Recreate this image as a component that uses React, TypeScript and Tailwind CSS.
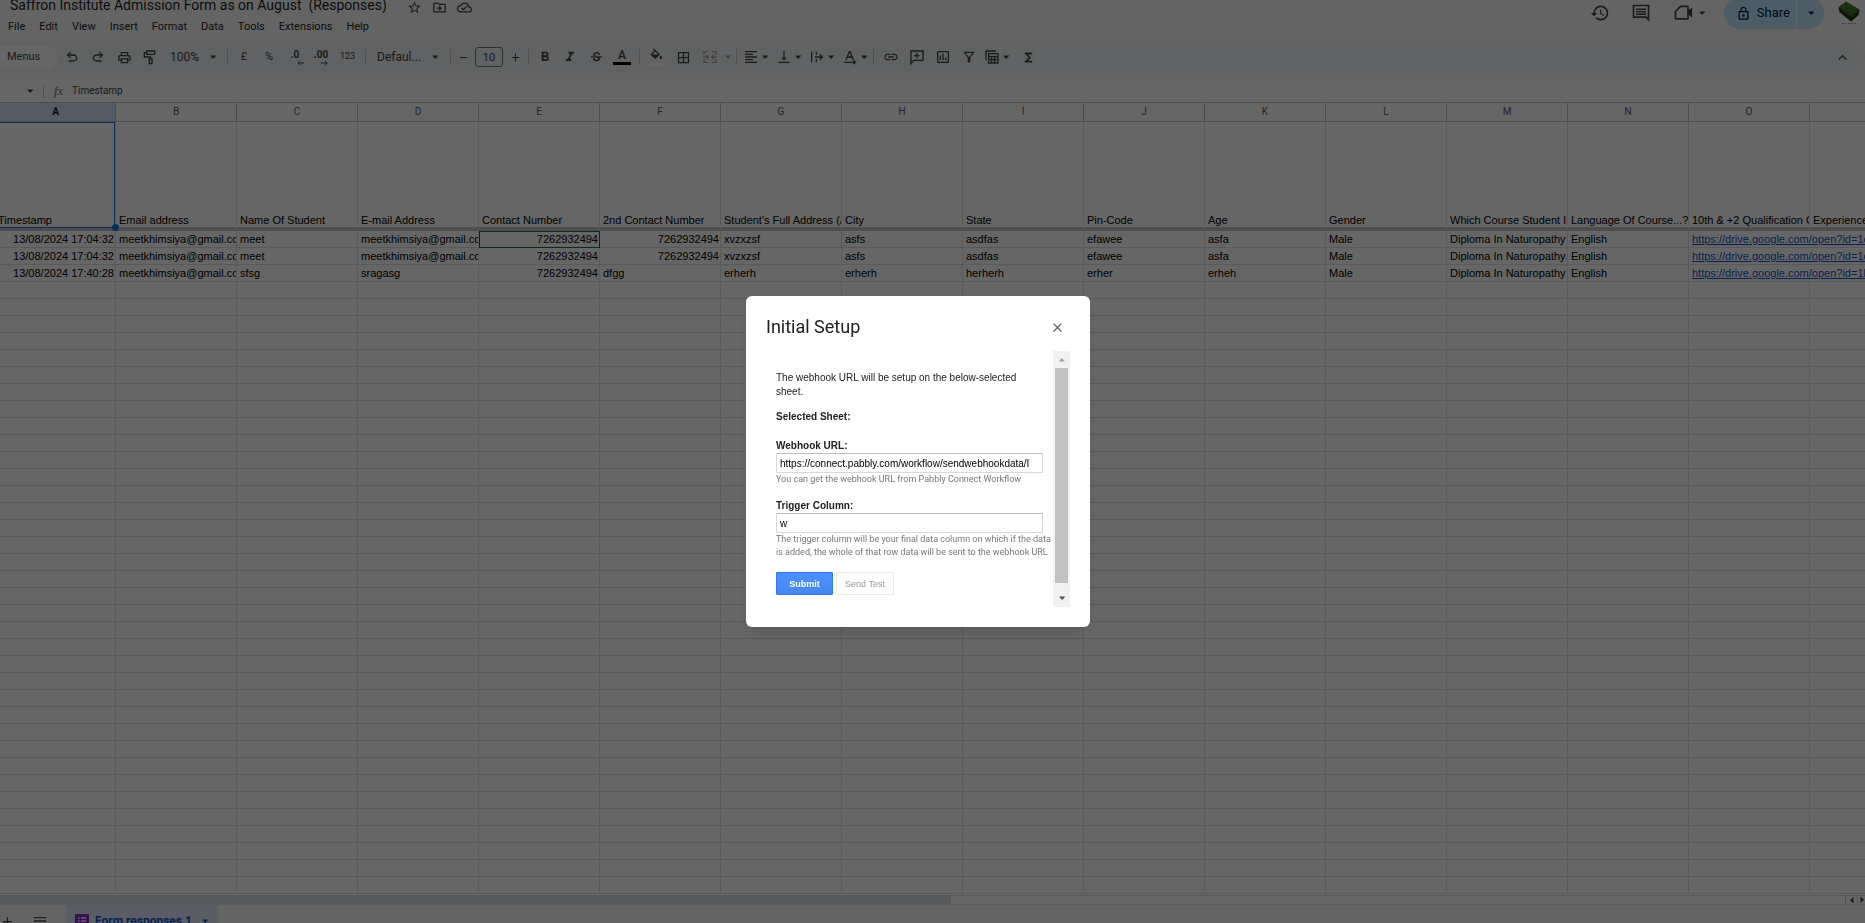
import { ReactNode } from "react";
import clsx from "clsx";
import {
    MdAdd,
    MdBorderAll,
    MdClose,
    MdExpandLess,
    MdFormatAlignLeft,
    MdFormatBold,
    MdFormatItalic,
    MdFunctions,
    MdHistory,
    MdLink,
    MdMenu,
    MdOutlineCloudDone,
    MdOutlineDriveFileMove,
    MdOutlineFilterAlt,
    MdOutlineInsertChart,
    MdOutlineLock,
    MdOutlinePrint,
    MdRemove,
    MdStarOutline,
    MdStrikethroughS,
    MdVerticalAlignBottom,
} from "react-icons/md";

const menus = ["File", "Edit", "View", "Insert", "Format", "Data", "Tools", "Extensions", "Help"];

const columns = ["A", "B", "C", "D", "E", "F", "G", "H", "I", "J", "K", "L", "M", "N", "O", ""];

const headings = [
    "Timestamp",
    "Email address",
    "Name Of Student",
    "E-mail Address",
    "Contact Number",
    "2nd Contact Number",
    "Student's Full Address (A",
    "City",
    "State",
    "Pin-Code",
    "Age",
    "Gender",
    "Which Course Student Is",
    "Language Of Course...?",
    "10th & +2 Qualification C",
    "Experience",
];

const responses = [
    ["13/08/2024 17:04:32", "meetkhimsiya@gmail.com", "meet", "meetkhimsiya@gmail.com", "7262932494", "7262932494", "xvzxzsf", "asfs", "asdfas", "efawee", "asfa", "Male", "Diploma In Naturopathy (", "English", "https://drive.google.com/open?id=1os", ""],
    ["13/08/2024 17:04:32", "meetkhimsiya@gmail.com", "meet", "meetkhimsiya@gmail.com", "7262932494", "7262932494", "xvzxzsf", "asfs", "asdfas", "efawee", "asfa", "Male", "Diploma In Naturopathy (", "English", "https://drive.google.com/open?id=1os", ""],
    ["13/08/2024 17:40:28", "meetkhimsiya@gmail.com", "sfsg", "sragasg", "7262932494", "dfgg", "erherh", "erherh", "herherh", "erher", "erheh", "Male", "Diploma In Naturopathy (", "English", "https://drive.google.com/open?id=1kb", ""],
];

const emptyRows = Array.from({ length: 36 }, (_, i) => i);

function Caret({ className }: { className?: string }) {
    return (
        <svg viewBox="0 0 10 10" className={clsx("w-[10px] h-[10px] shrink-0", className)} fill="currentColor">
            <path d="M2 3.5h6.4L5.2 7z" />
        </svg>
    );
}

function Stroke({ children, size = "w-4 h-4" }: { children: ReactNode; size?: string }) {
    return (
        <svg viewBox="0 0 24 24" className={size} fill="none" stroke="currentColor" strokeWidth="2">
            {children}
        </svg>
    );
}

function UndoIcon({ flip }: { flip?: boolean }) {
    return (
        <svg viewBox="0 -960 960 960" className={clsx("w-4 h-4", flip && "-scale-x-100")} fill="currentColor">
            <path d="M280-200v-80h284q63 0 109.5-40T720-420q0-60-46.5-100T564-560H312l104 104-56 56-200-200 200-200 56 56-104 104h252q97 0 169.5 63T800-420q0 94-72.5 157T564-200H280Z" />
        </svg>
    );
}

type ToolProps = {
    label: string;
    width?: string;
    className?: string;
    children: ReactNode;
};

function Tool({ label, width = "w-[26px]", className, children }: ToolProps) {
    return (
        <button type="button" aria-label={label} className={clsx("h-6 shrink-0 flex items-center justify-center", width, className)}>
            {children}
        </button>
    );
}

function Divider() {
    return <div className="w-px h-4 mx-1 shrink-0 bg-[#c7c7c7]" />;
}

function DropTool({ label, last, children }: { label: string; last?: boolean; children: ReactNode }) {
    return (
        <button type="button" aria-label={label} className={clsx("h-6 shrink-0 flex items-center", !last && "mr-1")}>
            <span className="w-[19px] flex justify-center">{children}</span>
            <Caret />
        </button>
    );
}

function Avatar() {
    return (
        <svg viewBox="0 0 24 26" className="w-6 h-[26px]">
            <circle cx="12" cy="12" r="11.5" fill="#fff" />
            <path d="M1.5 7 9 1.5l13.5 8-1 5.5-7.5 6.5L2.5 12z" fill="#3c7328" />
            <path d="M1.5 7 14 16.5l8.500-7-1 5.500-7.500 6.500L2.500 12z" fill="#24401b" />
            <path d="M5 6l3 1M9 4l4 3M11 9l4 2M15 7l3 2" stroke="#5c9a3c" />
            <path d="M5 23.500h14" stroke="#aaa" strokeDasharray="2 1" />
        </svg>
    );
}

function Header() {
    return (
        <header className="h-[41px] shrink-0 flex justify-between text-[#444746]">
            <div>
                <div className="h-[14px] flex items-center pl-[10px]">
                    <h1 className="whitespace-pre text-[14px] leading-3 pb-1 text-[#1f1f1f]">Saffron Institute Admission Form as on August  (Responses)</h1>
                    <div className="flex items-center gap-[10px] ml-5">
                        <button type="button" aria-label="Star"><MdStarOutline size={15} /></button>
                        <button type="button" aria-label="Move"><MdOutlineDriveFileMove size={15} /></button>
                        <button type="button" aria-label="Document status"><MdOutlineCloudDone size={15} /></button>
                    </div>
                </div>
                <nav className="flex gap-[14px] pl-2 pt-[5px] text-[11px] leading-4 text-[#1f1f1f]">
                    {menus.map((menu) => (
                        <button type="button" key={menu}>{menu}</button>
                    ))}
                </nav>
            </div>
            <div className="h-[26px] flex items-center pr-1">
                <button type="button" aria-label="Version history" className="mr-[21px]"><MdHistory size={20} /></button>
                <button type="button" aria-label="Comments" className="mr-[22px]">
                    <Stroke size="w-5 h-5">
                        <path d="M3 3h18v17l-3-3H3zM6 7.500h12M6 10.500h12M6 13.500h12" />
                    </Stroke>
                </button>
                <button type="button" aria-label="Join a call" className="flex items-center mr-[17px]">
                    <Stroke size="w-5 h-5">
                        <path d="M9 4h9v15H3V10z" strokeLinejoin="round" />
                        <path d="M18 10.500l4-3v8l-4-3z" fill="currentColor" />
                    </Stroke>
                    <Caret className="ml-1" />
                </button>
                <div className="h-8 flex rounded-full overflow-hidden text-[#001d35]">
                    <button type="button" className="w-[72px] flex items-center justify-end gap-[6px] pr-[6px] bg-[#c2e7ff] text-[13px]">
                        <MdOutlineLock size={15} />
                        Share
                    </button>
                    <button type="button" aria-label="Quick sharing" className="w-[27px] ml-px flex items-center justify-center bg-[#c2e7ff]"><Caret /></button>
                </div>
                <button type="button" aria-label="Account" className="ml-[13px]"><Avatar /></button>
            </div>
        </header>
    );
}

function Toolbar() {
    return (
        <div className="h-8 shrink-0 flex items-center rounded-r-full bg-[#f0f4f9] text-[#444746] text-[11px]">
            <button type="button" className="w-[58px] h-[22px] mr-px pl-[7px] shrink-0 text-left rounded-r-full bg-white">Menus</button>
            <Tool label="Undo"><UndoIcon /></Tool>
            <Tool label="Redo"><UndoIcon flip /></Tool>
            <Tool label="Print"><MdOutlinePrint size={15} /></Tool>
            <Tool label="Paint format">
                <Stroke>
                    <path d="M7 3h12v5H7zM7 5.500H3.500V12H13v3M11 15h4v7h-4z" />
                </Stroke>
            </Tool>
            <button type="button" className="w-[60px] h-6 shrink-0 flex items-center pl-[7px] text-[12px]">
                100%
                <Caret className="ml-auto mr-[5px]" />
            </button>
            <Divider />
            <Tool label="Format as currency" width="w-6">£</Tool>
            <Tool label="Format as percent">%</Tool>
            <Tool label="Decrease decimal places">
                <span className="relative text-[10px] font-bold leading-4 pb-1">
                    .0
                    <svg viewBox="0 0 8 6" className="absolute w-[7px] h-[6px] -right-[5px] bottom-px" fill="none" stroke="currentColor"><path d="M8 3H1M3.500.5 1 3l2.500 2.500" /></svg>
                </span>
            </Tool>
            <Tool label="Increase decimal places">
                <span className="relative text-[10px] font-bold leading-4 pb-1">
                    .00
                    <svg viewBox="0 0 8 6" className="absolute w-[7px] h-[6px] right-0 bottom-px" fill="none" stroke="currentColor"><path d="M0 3h7M4.500.5 7 3 4.500 5.500" /></svg>
                </span>
            </Tool>
            <Tool label="More formats" width="w-[27px]"><span className="text-[9px]">123</span></Tool>
            <Divider />
            <button type="button" className="w-[76px] h-6 shrink-0 flex items-center pl-[7px] text-[12px]">
                Defaul...
                <Caret className="ml-auto mr-[6px]" />
            </button>
            <Divider />
            <Tool label="Decrease font size" width="w-[17px]"><MdRemove size={13} /></Tool>
            <input aria-label="Font size" defaultValue="10" className="w-7 h-5 mx-[3px] shrink-0 rounded-[3px] border border-[#747775] text-center text-[11px]" />
            <Tool label="Increase font size" width="w-[18px]"><MdAdd size={13} /></Tool>
            <Divider />
            <Tool label="Bold" width="w-6"><MdFormatBold size={16} /></Tool>
            <Tool label="Italic"><MdFormatItalic size={16} /></Tool>
            <Tool label="Strikethrough"><MdStrikethroughS size={15} /></Tool>
            <Tool label="Text colour">
                <span className="w-[18px] h-4 border-b-[3px] border-black leading-3 text-[12px] font-medium">A</span>
            </Tool>
            <Divider />
            <Tool label="Fill colour" width="w-[25px]">
                <span className="w-[18px] h-[18px] border-b-[3px] border-white flex justify-center">
                    <svg viewBox="0 0 24 20" className="w-[15px] h-[13px]" fill="currentColor">
                        <path d="M16.56 8.94 7.62 0 6.21 1.41l2.38 2.38-5.15 5.15a1.49 1.49 0 0 0 0 2.12l5.5 5.5c.29.29.68.44 1.06.44s.77-.15 1.06-.44l5.5-5.5c.59-.58.59-1.53 0-2.12zM5.21 10 10 5.21 14.79 10H5.21zM19 11.5s-2 2.17-2 3.5c0 1.1.9 2 2 2s2-.9 2-2c0-1.33-2-3.5-2-3.5z" />
                    </svg>
                </span>
            </Tool>
            <Tool label="Borders" width="w-7"><MdBorderAll size={15} /></Tool>
            <button type="button" aria-label="Merge cells" disabled className="h-6 shrink-0 flex items-center text-[#a4a6a6]">
                <span className="w-[26px] flex justify-center">
                    <Stroke>
                        <path d="M9 4H3v5M15 4h6v5M9 20H3v-5M15 20h6v-5M2 12h7M6.500 9l3 3-3 3M22 12h-7M17.500 9l-3 3 3 3" />
                    </Stroke>
                </span>
                <Caret className="-mr-px" />
            </button>
            <Divider />
            <DropTool label="Horizontal align"><MdFormatAlignLeft size={16} /></DropTool>
            <DropTool label="Vertical align"><MdVerticalAlignBottom size={16} /></DropTool>
            <DropTool label="Text wrapping">
                <Stroke><path d="M4 4v16M11 4v5M11 15v5M9 12h11M16 8l4 4-4 4" /></Stroke>
            </DropTool>
            <DropTool label="Text rotation" last>
                <Stroke><path d="M6 16 11 4h1l5 12M8 12h7M3 20h17M17 17l3 3-3 3" /></Stroke>
            </DropTool>
            <Divider />
            <Tool label="Insert link"><MdLink size={16} /></Tool>
            <Tool label="Insert comment">
                <Stroke><path d="M3 22V3h18v14H7zM12 6v8M8 10h8" /></Stroke>
            </Tool>
            <Tool label="Insert chart"><MdOutlineInsertChart size={16} /></Tool>
            <Tool label="Create a filter"><MdOutlineFilterAlt size={16} /></Tool>
            <DropTool label="Table views">
                <Stroke><path d="M3 17V3h15M7 7h14v14H7zM7 11.500h14M7 16h14M11.500 12v9M16 12v9" /></Stroke>
            </DropTool>
            <Tool label="Functions"><MdFunctions size={15} /></Tool>
            <Tool label="Hide the menus" className="ml-auto mr-[10px]"><MdExpandLess size={17} /></Tool>
        </div>
    );
}

function FormulaBar() {
    return (
        <div className="h-[22px] mt-[7px] shrink-0 flex items-center bg-white text-[#444746]">
            <button type="button" aria-label="Name box" className="ml-[25px]"><Caret /></button>
            <div className="w-px h-[13px] ml-2 bg-[#c7c7c7]" />
            <span className="ml-[10px] w-[18px] font-['Liberation_Serif',serif] italic text-[13px] leading-4 text-[#747775]">fx</span>
            <input aria-label="Formula" defaultValue="Timestamp" className="flex-1 h-4 mb-[2px] text-[10px]" />
        </div>
    );
}

function Cell({ text, col, marked }: { text: string; col: number; marked?: boolean }) {
    const isNumber = /^\d+$/.test(text) || col === 0;
    const isLink = text.startsWith("https");
    return (
        <td className={clsx("h-[17px] p-0 border-b border-[#e1e1e1]", !isLink && "border-r", marked && "outline -outline-offset-1 outline-[#137333]")}>
            <div className={clsx("h-4 leading-4 pl-[3px] whitespace-nowrap", isNumber && "text-right pr-px", !isLink && "overflow-hidden")}>
                {isLink ? <a href={text} className="underline text-[#1155cc]">{text}</a> : text}
            </div>
        </td>
    );
}

function Sheet() {
    return (
        <main className="flex-1 min-h-0 overflow-hidden bg-white">
            <table className="w-[1931px] table-fixed border-separate border-spacing-0 font-['Liberation_Sans',Arial,sans-serif] text-[11px] text-black">
                <colgroup>
                    {columns.map((name, i) => (
                        <col key={i} className={i === 0 ? "w-[116px]" : "w-[121px]"} />
                    ))}
                </colgroup>
                <thead>
                    <tr>
                        {columns.map((name, i) => (
                            <th
                                key={i}
                                className={clsx(
                                    "h-5 p-0 border-y border-r border-[#c0c0c0] font-['Roboto',sans-serif] text-[10px] leading-4",
                                    i === 0 ? "pr-1 bg-[#d3e3fd] text-[#041e49] font-bold" : "font-normal text-[#575a5a]"
                                )}
                            >
                                {name}
                            </th>
                        ))}
                    </tr>
                </thead>
                <tbody>
                    <tr>
                        {headings.map((text, i) => (
                            <td
                                key={text}
                                className={clsx("relative h-[109px] p-0 align-bottom border-r border-b-4 border-r-[#e1e1e1] border-b-[#c4c4c4]", i === 0 && "z-10")}
                            >
                                <div className={clsx("leading-[14px] whitespace-nowrap overflow-hidden", i === 0 ? "-ml-[2px]" : "pl-[3px]")}>{text}</div>
                                {i === 0 && (
                                    <>
                                        <div className="absolute top-0 left-0 right-0 -bottom-px border border-l-0 border-[#1a73e8]" />
                                        <div className="absolute -right-1 -bottom-1 w-[7px] h-[7px] rounded-full bg-[#1a73e8]" />
                                    </>
                                )}
                            </td>
                        ))}
                    </tr>
                    {responses.map((row, r) => (
                        <tr key={r}>
                            {row.map((text, c) => (
                                <Cell key={c} text={text} col={c} marked={r === 0 && c === 4} />
                            ))}
                        </tr>
                    ))}
                    {emptyRows.map((r) => (
                        <tr key={r}>
                            {columns.map((name, c) => (
                                <td key={c} className="h-[17px] p-0 border-r border-b border-[#e1e1e1]" />
                            ))}
                        </tr>
                    ))}
                </tbody>
            </table>
        </main>
    );
}

function Footer() {
    return (
        <footer className="h-[29px] shrink-0 overflow-hidden">
            <div className="h-[11px] pt-px flex border-b border-[#e1e1e1] bg-white text-[#444746]">
                <div className="w-[51%] bg-[#dadce0]" />
                <div className="flex-1 border-t border-[#e1e1e1]" />
                <button type="button" aria-label="Scroll left" className="w-3 border-l border-t border-[#d0d0d0] flex items-center justify-center"><Caret className="rotate-90" /></button>
                <button type="button" aria-label="Scroll right" className="w-2 border-l border-t border-[#d0d0d0] flex items-center justify-center"><Caret className="-rotate-90" /></button>
            </div>
            <div className="h-8 flex items-center text-[#444746]">
                <button type="button" aria-label="Add sheet"><MdAdd size={15} /></button>
                <button type="button" aria-label="All sheets" className="ml-[17px]"><MdMenu size={16} /></button>
                <button type="button" className="w-[152px] h-full ml-[18px] pl-[9px] flex items-center bg-[#e1e9f7] text-[#0b57d0] text-[12px] font-bold">
                    <svg viewBox="0 0 14 14" className="w-[14px] h-[14px] mr-[6px]">
                        <rect width="14" height="14" rx="1" fill="#8430ce" />
                        <path d="M3 4h1.500M6 4h5M3 7h1.500M6 7h5M3 10h1.500M6 10h5" stroke="#fff" strokeWidth="1.400" />
                    </svg>
                    Form responses 1
                    <Caret className="ml-auto mr-2" />
                </button>
            </div>
        </footer>
    );
}

function SetupDialog() {
    return (
        <div className="fixed inset-0 z-20 flex items-center justify-center pr-[29px] bg-black/60">
            <div role="dialog" aria-labelledby="setup-title" className="w-[344px] pb-5 rounded-md bg-white shadow-lg">
                <div className="h-[55px] pl-5 pr-[25px] pb-[6px] pt-[13px] flex items-center justify-between">
                    <h2 id="setup-title" className="text-[18px] leading-6 text-[#202124]">Initial Setup</h2>
                    <button type="button" aria-label="Close" className="text-[#5f6368]"><MdClose size={15} /></button>
                </div>
                <div className="flex pl-[30px] pr-5 font-['Liberation_Sans',Arial,sans-serif] text-[10px] leading-[14px] text-[#222]">
                    <form className="flex-1 min-w-0 pt-5 mr-[10px]">
                        <p>The webhook URL will be setup on the below-selected sheet.</p>
                        <p className="mt-[11px] font-bold">Selected Sheet:</p>
                        <label htmlFor="webhook" className="block mt-[15px] font-bold">Webhook URL:</label>
                        <input
                            id="webhook"
                            defaultValue="https://connect.pabbly.com/workflow/sendwebhookdata/I"
                            className="block w-full h-5 px-[3px] border border-[#d9d9d9] border-t-[#c0c0c0] text-black"
                        />
                        <p className="font-['Roboto',sans-serif] text-[9px] leading-[13px] text-[#777]">You can get the webhook URL from Pabbly Connect Workflow</p>
                        <label htmlFor="trigger" className="block mt-[13px] font-bold">Trigger Column:</label>
                        <input id="trigger" defaultValue="w" className="block w-full h-5 px-[3px] border border-[#d9d9d9] border-t-[#c0c0c0] text-black" />
                        <p className="font-['Roboto',sans-serif] text-[9px] leading-[13px] whitespace-nowrap text-[#777]">
                            The trigger column will be your final data column on which if the data
                            <br />
                            is added, the whole of that row data will be sent to the webhook URL
                        </p>
                        <div className="flex gap-[3px] mt-[13px]">
                            <button type="button" className="w-[57px] h-[23px] rounded-[1px] border border-[#3079ed] bg-linear-to-b from-[#4d90fe] to-[#4787ed] text-[9px] font-bold text-white">Submit</button>
                            <button type="button" className="w-[58px] h-[23px] rounded-[1px] border border-[#e8e8e8] text-[9px] text-[#999]">Send Test</button>
                        </div>
                    </form>
                    <div className="w-[17px] h-64 shrink-0 flex flex-col items-center bg-[#f1f1f1]">
                        <button type="button" aria-label="Scroll up" className="h-[17px] text-[#a3a3a3]"><Caret className="rotate-180" /></button>
                        <div className="w-[13px] h-[215px] bg-[#c1c1c1]" />
                        <button type="button" aria-label="Scroll down" className="mt-auto h-[17px] mb-px text-[#505050]"><Caret /></button>
                    </div>
                </div>
            </div>
        </div>
    );
}

export default function App() {
    return (
        <div className="h-screen overflow-hidden flex flex-col bg-[#f9fbfd] font-['Roboto',sans-serif]">
            <Header />
            <Toolbar />
            <FormulaBar />
            <Sheet />
            <Footer />
            <SetupDialog />
        </div>
    );
}
